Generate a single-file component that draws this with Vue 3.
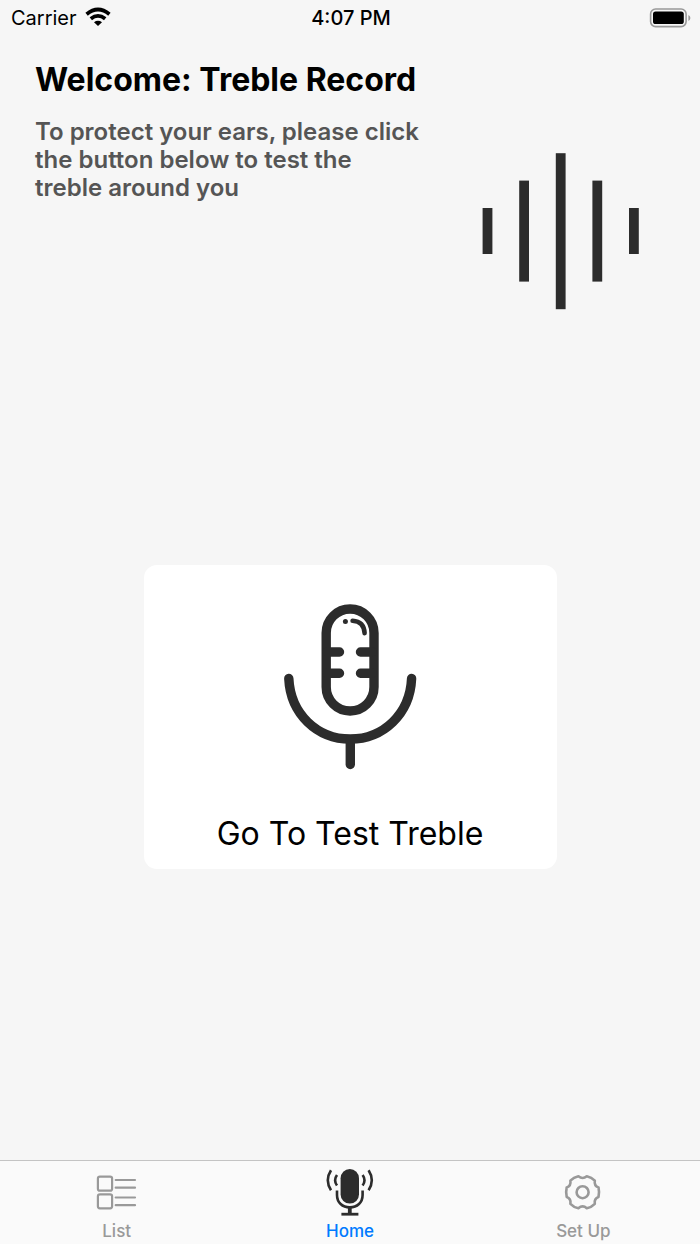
<script setup>
const tabs = [
  { id: 'list', label: 'List' },
  { id: 'home', label: 'Home' },
  { id: 'setup', label: 'Set Up' },
]
const active = 'home'
</script>

<template>
  <div class="app">
    <header class="status">
      <div class="carrier">
        <span>Carrier</span>
        <svg class="wifi" width="26" height="20" viewBox="0 0 26 20" aria-hidden="true">
          <g fill="none" stroke="#000" stroke-width="3.8">
            <path d="M1.6 7.2Q13 -2.2 24.4 7.2" />
            <path d="M5.8 11.8Q13 6 20.2 11.8" />
          </g>
          <path d="M9 15.2Q13 12.4 17 15.2L13 19Z" fill="#000" />
        </svg>
      </div>
      <time class="clock">4:07 PM</time>
      <div class="power">
        <svg width="42" height="20" viewBox="0 0 42 20" role="img" aria-label="Battery full">
          <rect x="1.6" y="1" width="35.5" height="17.6" rx="5" fill="none" stroke="#999" stroke-width="1.6" />
          <rect x="4" y="3.4" width="30.8" height="12.6" rx="2.6" fill="#000" />
          <path d="M39.4 7Q41.4 8 41.4 10T39.4 13Z" fill="#999" />
        </svg>
      </div>
    </header>

    <main class="content">
      <section class="intro">
        <div class="copy">
          <h1>Welcome: Treble Record</h1>
          <p>To protect your ears, please click the button below to test the treble around you</p>
        </div>
        <svg class="wave" width="158" height="158" viewBox="0 0 158 158" fill="#2c2c2c" aria-hidden="true">
          <rect x="0.6" y="56" width="9.8" height="46" />
          <rect x="37.2" y="28.6" width="9.8" height="101" />
          <rect x="73.8" y="1.2" width="9.8" height="156" />
          <rect x="110.4" y="28.6" width="9.8" height="101" />
          <rect x="147" y="56" width="9.8" height="46" />
        </svg>
      </section>

      <button class="card" type="button">
        <svg width="134" height="166" viewBox="0 0 134 166" fill="none" stroke="#2c2c2c" stroke-width="9.4" stroke-linecap="round" aria-hidden="true">
          <rect x="43.2" y="5" width="47.8" height="102" rx="23.9" />
          <path d="M44 48H56.5M44 69.2H56.5M89 48H77.5M89 69.2H77.5" />
          <path d="M5.8 74.5C7.5 110 34 135 67.2 135S127 110 128.6 74.5" />
          <path d="M67.3 136V160.5" />
          <path d="M69.6 16.8Q81 17.5 81.6 29.2" stroke-width="4.6" />
          <circle cx="62.4" cy="17.4" r="2.5" fill="#2c2c2c" stroke="none" />
        </svg>
        <span>Go To Test Treble</span>
      </button>
    </main>

    <nav class="tabs">
      <a v-for="t in tabs" :key="t.id" :href="'#' + t.id" class="tab" :class="{ active: t.id === active }">
        <svg v-if="t.id === 'list'" width="48" height="48" viewBox="0 0 48 48" fill="none" stroke="#999" stroke-width="2.2" aria-hidden="true">
          <rect x="4.9" y="8.7" width="14.2" height="14" rx="2" />
          <rect x="4.9" y="26.3" width="14.2" height="14" rx="2" />
          <path d="M22.7 12H42M22.7 19.7H42M22.7 29.5H42M22.7 37.2H42" stroke-linecap="round" />
        </svg>
        <svg v-else-if="t.id === 'home'" width="48" height="48" viewBox="0 0 48 48" fill="none" stroke="#2c2c2c" stroke-width="2.6" aria-hidden="true">
          <rect x="14.6" y="1" width="18.4" height="34.6" rx="9.2" fill="#2c2c2c" stroke="none" />
          <path d="M11 22.5V27C11 34.5 16.4 39.4 23.8 39.4S36.6 34.5 36.6 27V22.5" />
          <path d="M23.8 39V46" stroke-width="3.8" />
          <path d="M15.4 46.2H32.4" stroke-width="2.8" />
          <path d="M5 2.2Q-1.4 12.2 5 22.2M11 7Q7.2 12.2 11 17.6M42.6 2.2Q49 12.2 42.6 22.2M36.6 7Q40.4 12.2 36.6 17.6" />
        </svg>
        <svg v-else width="48" height="48" viewBox="0 0 48 48" fill="none" stroke="#999" stroke-width="2.6" stroke-linejoin="round" aria-hidden="true">
          <g transform="translate(23.6 24.2)">
            <circle r="6" />
            <path d="M4.2 -16Q9 -15 12.2 -11.6Q11.4 -6.2 15.9 -4.8Q17 0 15.9 4.8Q11.4 6.2 12.2 11.6Q9 15 4.2 16Q0 12.4 -4.2 16Q-9 15 -12.2 11.6Q-11.4 6.2 -15.9 4.8Q-17 0 -15.9 -4.8Q-11.4 -6.2 -12.2 -11.6Q-9 -15 -4.2 -16Q0 -12.4 4.2 -16Z" />
          </g>
        </svg>
        <span>{{ t.label }}</span>
      </a>
    </nav>
  </div>
</template>

<style>
html,
body {
  background: #f6f6f6;
}
</style>

<style scoped>
.app {
  display: flex;
  flex-direction: column;
  min-height: 100vh;
  background: #f6f6f6;
  color: #000;
  font-family: Inter, "Liberation Sans", sans-serif;
}
.status {
  display: grid;
  grid-template-columns: 1fr auto 1fr;
  align-items: center;
  height: 36px;
  padding: 0 9px 0 11px;
  font-size: 20px;
}
.carrier {
  display: flex;
  align-items: center;
  gap: 8px;
}
.wifi {
  margin-bottom: 2px;
}
.clock {
  font-weight: 500;
}
.power {
  display: flex;
  justify-content: flex-end;
}
.content {
  flex: 1;
  display: flex;
  flex-direction: column;
  align-items: center;
}
.intro {
  align-self: stretch;
  display: flex;
  justify-content: space-between;
  padding: 24px 60px 0 35px;
}
.copy {
  max-width: 386px;
}
h1 {
  margin: 0;
  font-size: 32px;
  line-height: 40px;
  font-weight: 700;
  white-space: nowrap;
}
p {
  margin: 18px 0 0;
  color: #555;
  font-size: 24px;
  line-height: 28px;
  font-weight: 600;
}
.wave {
  flex: none;
  margin-top: 92px;
}
.card {
  display: flex;
  flex-direction: column;
  align-items: center;
  gap: 44px;
  width: 59%;
  margin: 255px 0 40px;
  padding: 39px 16px 15px;
  border: 0;
  border-radius: 13px;
  background: #fff;
  color: #000;
  font: inherit;
  font-size: 32px;
  line-height: 40px;
  cursor: pointer;
}
.tabs {
  display: grid;
  grid-template-columns: repeat(3, 1fr);
  height: 84px;
  box-sizing: border-box;
  border-top: 1px solid #c4c4c4;
  background: #fafafa;
}
.tab {
  display: flex;
  flex-direction: column;
  align-items: center;
  padding-top: 7px;
  color: #999;
  font-size: 17px;
  line-height: 30px;
  font-weight: 500;
  text-decoration: none;
}
.tab.active {
  color: #007aff;
}
</style>
